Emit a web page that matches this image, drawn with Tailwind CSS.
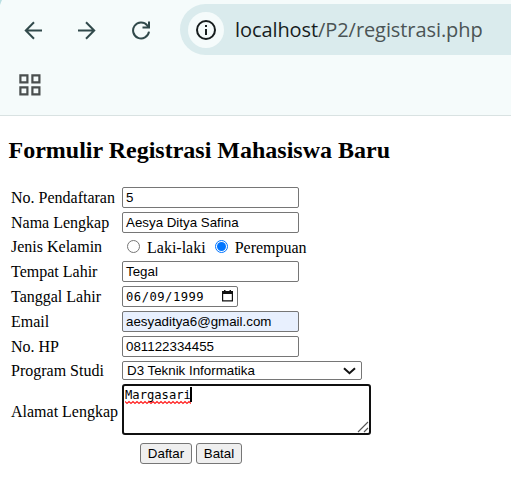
<!DOCTYPE html>
<html lang="id">
<head>
<meta charset="utf-8">
<title>Registrasi</title>
<script src="https://cdn.jsdelivr.net/npm/@tailwindcss/browser@4"></script>
</head>
<body class="w-[511px] h-[482px] overflow-hidden bg-white text-black">
<header class="h-[116px] bg-[#f5fbfb] border-b border-[#d9e2e2] relative">
  <svg class="absolute left-0 top-0" width="3" height="5" viewBox="0 0 3 5"><path d="M0 0H2Q1 2 0 5Z" fill="#b9dfe2"/></svg>
  <div class="flex items-center h-[51px] pt-1 box-content">
    <svg class="shrink-0 ml-[23px]" width="20" height="20" viewBox="0 0 20 20" fill="none" stroke="#31494b" stroke-width="2"><path d="M19 10.5H3M11 2.3 2.8 10.5 11 18.7"/></svg>
    <svg class="shrink-0 ml-[34px]" width="20" height="20" viewBox="0 0 20 20" fill="none" stroke="#31494b" stroke-width="2"><path d="M1 10.5H17M9 2.3 17.2 10.5 9 18.7"/></svg>
    <svg class="shrink-0 ml-[34px]" width="20" height="20" viewBox="0 0 20 20" fill="none" stroke="#31494b" stroke-width="2"><path d="M18 11.7A8 8 0 1 1 16.2 5.3L18 7.5M18 1.5V7.5H11.5"/></svg>
    <div class="ml-[29px] h-[51px] flex-1 rounded-l-full bg-[#daebed] flex items-center pl-2">
      <div class="size-9 rounded-full bg-[#f5fbfb] flex items-center justify-center shrink-0">
        <svg width="20" height="20" viewBox="0 0 20 20"><circle cx="10" cy="10" r="9" fill="none" stroke="#171d1e" stroke-width="2"/><path d="M9 5h2v2H9zM9 9h2v6H9z" fill="#171d1e"/></svg>
      </div>
      <div class="ml-[11px] whitespace-nowrap font-['Open_Sans',sans-serif] text-[20px] leading-[26px] tracking-[-0.08px] text-[#171d1e]"><span>localhost</span><span class="text-[#4b5455]">/P2/registrasi.php</span></div>
    </div>
  </div>
  <svg class="ml-[19px] mt-[19px]" width="22" height="22" viewBox="0 0 22 22" fill="none" stroke="#4a4f4f" stroke-width="2.2"><path d="M1.4 1.4h7v7h-7zM13.4 1.4h7v7h-7zM1.4 13.4h7v7h-7zM13.4 13.4h7v7h-7z"/></svg>
</header>
<main class="font-['Liberation_Serif',serif] text-[16px] leading-[18px]">
  <h2 class="ml-[8.5px] pt-5 h-[69px] text-[24px] leading-[28px] font-bold whitespace-nowrap">Formulir Registrasi Mahasiswa Baru</h2>
  <div class="ml-[11px] grid grid-cols-[111px_249px] grid-rows-[25px_25px_24px_25px_25px_25px_25px_23px_55px_33px] items-center whitespace-nowrap">
    <div>No. Pendaftaran</div>
    <div class="w-[177px] h-[21px] border border-[#767676] rounded-[2px] px-[3px] font-['Liberation_Sans',sans-serif] text-[13.333px] leading-[19px]">5</div>
    <div>Nama Lengkap</div>
    <div class="w-[177px] h-[21px] border border-[#767676] rounded-[2px] px-[3px] font-['Liberation_Sans',sans-serif] text-[13.333px] leading-[19px]">Aesya Ditya Safina</div>
    <div>Jenis Kelamin</div>
    <div class="flex items-center pl-[5px]">
      <span class="size-[13px] rounded-full border border-[#767676] shrink-0 -mt-px"></span><span class="ml-[7px] mt-0.5">Laki-laki</span>
      <span class="ml-[9px] size-[13px] rounded-full border border-[#0075ff] flex items-center justify-center shrink-0 -mt-px"><span class="size-[9px] rounded-full bg-[#0075ff]"></span></span><span class="ml-[7px] mt-0.5">Perempuan</span>
    </div>
    <div>Tempat Lahir</div>
    <div class="w-[177px] h-[21px] border border-[#767676] rounded-[2px] px-[3px] font-['Liberation_Sans',sans-serif] text-[13.333px] leading-[19px]">Tegal</div>
    <div>Tanggal Lahir</div>
    <div class="w-[116px] h-[21px] border border-[#767676] rounded-[2px] pl-[3px] pr-1 flex items-center justify-between font-['DejaVu_Sans_Mono',monospace] text-[12.17px] leading-[19px]"><span class="tracking-[0.5px] pt-px">06/09/1999</span>
      <svg class="-mt-px" width="11" height="12" viewBox="0 0 11 12"><path d="M2 0h1.5v1h4V0H9v1h2v10.5H0V1h2zM1.2 4v6.3h8.6V4z" fill="#111" fill-rule="evenodd"/></svg>
    </div>
    <div>Email</div>
    <div class="w-[177px] h-[21px] border border-[#767676] rounded-[2px] bg-[#e8f0fe] px-[3px] font-['Liberation_Sans',sans-serif] text-[13.333px] leading-[19px]">aesyaditya6@gmail.com</div>
    <div>No. HP</div>
    <div class="w-[177px] h-[21px] border border-[#767676] rounded-[2px] px-[3px] font-['Liberation_Sans',sans-serif] text-[13.333px] leading-[19px]">081122334455</div>
    <div>Program Studi</div>
    <div class="w-[240px] h-[19px] border border-[#767676] rounded-[2px] pl-1 pr-[5px] flex items-center justify-between font-['Liberation_Sans',sans-serif] text-[13.333px] leading-[17px]"><span>D3 Teknik Informatika</span>
      <svg width="13" height="8" viewBox="0 0 13 8"><path d="M1 1.2 6.5 6.2 12 1.2" fill="none" stroke="#111" stroke-width="2"/></svg>
    </div>
    <div class="pt-1">Alamat Lengkap</div>
    <div class="relative w-[249px] h-[51px] border-2 border-[#101010] rounded-[3px] pl-px pt-px font-['DejaVu_Sans_Mono',monospace] text-[12.17px] leading-[15px] flex items-start">
      <span class="pt-px">Margasari</span><span class="w-0.5 h-[15px] bg-black -ml-px"></span>
      <svg class="absolute left-px top-[14px]" width="66" height="5" viewBox="0 0 66 5"><path d="M0 1l2 2 2-2 2 2 2-2 2 2 2-2 2 2 2-2 2 2 2-2 2 2 2-2 2 2 2-2 2 2 2-2 2 2 2-2 2 2 2-2 2 2 2-2 2 2 2-2 2 2 2-2 2 2 2-2 2 2 2-2 2 2 2-2 2 2" transform="translate(0 .5)" fill="none" stroke="#ff2020" stroke-width="1.2"/></svg>
      <svg class="absolute right-0 bottom-0" width="12" height="12" viewBox="0 0 12 12"><path d="M1 11 11 1M7 11 11 7" stroke="#555" stroke-width="1.1"/></svg>
    </div>
    <div></div>
    <div class="flex gap-1 pl-[18px] font-['Liberation_Sans',sans-serif] text-[13.333px] leading-[19px] text-center">
      <div class="w-[52px] h-[21px] border border-[#767676] rounded-[3px] bg-[#efefef]">Daftar</div>
      <div class="w-[46px] h-[21px] border border-[#767676] rounded-[3px] bg-[#efefef]">Batal</div>
    </div>
  </div>
</main>
</body>
</html>
